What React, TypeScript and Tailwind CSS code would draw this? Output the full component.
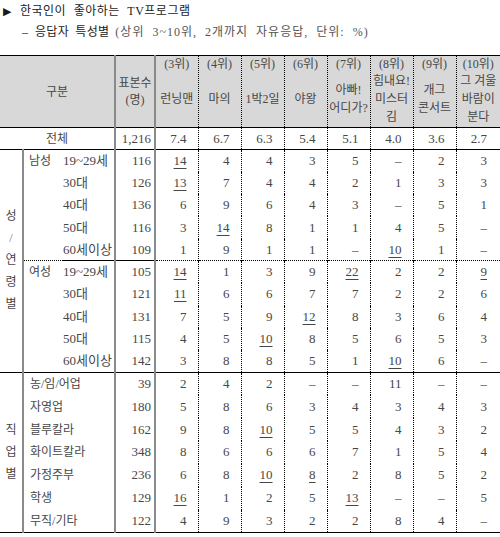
import React from "react";

const ranks: { r: string; n: string[] }[] = [
  { r: "(3위)", n: ["런닝맨"] },
  { r: "(4위)", n: ["마의"] },
  { r: "(5위)", n: ["1박2일"] },
  { r: "(6위)", n: ["야왕"] },
  { r: "(7위)", n: ["아빠!", "어디가?"] },
  { r: "(8위)", n: ["힘내요!", "미스터", "김"] },
  { r: "(9위)", n: ["개그", "콘서트"] },
  { r: "(10위)", n: ["그 겨울", "바람이", "분다"] },
];

const total = ["7.4", "6.7", "6.3", "5.4", "5.1", "4.0", "3.6", "2.7"];

type Row = { sex?: string; label: string; n: string; v: string[] };

const male: Row[] = [
  { sex: "남성", label: "19~29세", n: "116", v: ["_14", "4", "4", "3", "5", "–", "2", "3"] },
  { label: "30대", n: "126", v: ["_13", "7", "4", "4", "2", "1", "3", "3"] },
  { label: "40대", n: "136", v: ["6", "9", "6", "4", "3", "–", "5", "1"] },
  { label: "50대", n: "116", v: ["3", "_14", "8", "1", "1", "4", "5", "–"] },
  { label: "60세이상", n: "109", v: ["1", "9", "1", "1", "–", "_10", "1", "–"] },
];

const female: Row[] = [
  { sex: "여성", label: "19~29세", n: "105", v: ["_14", "1", "3", "9", "_22", "2", "2", "_9"] },
  { label: "30대", n: "121", v: ["_11", "6", "6", "7", "7", "2", "2", "6"] },
  { label: "40대", n: "131", v: ["7", "5", "9", "_12", "8", "3", "6", "4"] },
  { label: "50대", n: "115", v: ["4", "5", "_10", "8", "5", "6", "5", "3"] },
  { label: "60세이상", n: "142", v: ["3", "8", "8", "5", "1", "_10", "6", "–"] },
];

const jobs: Row[] = [
  { label: "농/임/어업", n: "39", v: ["2", "4", "2", "–", "–", "11", "–", "–"] },
  { label: "자영업", n: "180", v: ["5", "8", "6", "3", "4", "3", "4", "3"] },
  { label: "블루칼라", n: "162", v: ["9", "8", "_10", "5", "5", "4", "3", "2"] },
  { label: "화이트칼라", n: "348", v: ["8", "6", "6", "6", "7", "1", "5", "4"] },
  { label: "가정주부", n: "236", v: ["6", "8", "_10", "_8", "2", "8", "5", "2"] },
  { label: "학생", n: "129", v: ["_16", "1", "2", "5", "_13", "–", "–", "5"] },
  { label: "무직/기타", n: "122", v: ["4", "9", "3", "2", "2", "8", "4", "–"] },
];

function Num({ v }: { v: string }) {
  const u = v.startsWith("_");
  const t = u ? v.slice(1) : v;
  return (
    <span className={u ? "underline decoration-1 underline-offset-[3px]" : ""}>{t}</span>
  );
}

function Vals({ v, topDotted }: { v: string[]; topDotted?: boolean }) {
  return (
    <>
      {v.map((x, i) => (
        <td
          key={i}
          className={
            "p-0 text-right align-middle " +
            (i === 7 ? "pr-[13px] " : "pr-[11px] border-r border-dotted border-r-black ") +
            (topDotted ? "border-t border-dotted border-t-black" : "")
          }
        >
          <Num v={x} />
        </td>
      ))}
    </>
  );
}

const grayR = "border-r-2 border-solid border-r-[#8a8a8a]";

export default function App() {
  return (
    <div className="w-[500px] h-[537px] bg-white overflow-hidden text-[#474747] font-['Liberation_Serif','Noto_Sans_CJK_KR',serif]">
      <div className="mt-[3px] h-[17px] leading-[17px] text-[12px] text-[#1a1a1a] flex items-center">
        <span className="ml-[3px] w-[17px] text-[11px] font-['DejaVu_Sans',sans-serif]">▶</span>
        <span className="tracking-[0.5px] [word-spacing:4px]">한국인이 좋아하는 TV프로그램</span>
      </div>
      <div className="mt-[4px] h-[17px] leading-[17px] text-[12px] flex items-center">
        <span className="ml-[22px] w-[13px] text-[#222]">–</span>
        <span className="text-[#222] tracking-[0.3px] [word-spacing:3px]">응답자 특성별</span>
        <span className="ml-[6px] text-[#555] tracking-[1px] [word-spacing:4px]">(상위 3~10위, 2개까지 자유응답, 단위: %)</span>
      </div>
      <table className="mt-[14px] w-[500px] table-fixed border-collapse text-[13px] leading-[16px]">
        <colgroup>
          <col className="w-[23px]" />
          <col className="w-[40px]" />
          <col className="w-[52px]" />
          <col className="w-[40px]" />
          <col className="w-[43px]" />
          <col className="w-[43px]" />
          <col className="w-[43px]" />
          <col className="w-[43px]" />
          <col className="w-[43px]" />
          <col className="w-[43px]" />
          <col className="w-[43px]" />
          <col className="w-[44px]" />
        </colgroup>
        <thead>
          <tr className="h-[72px] bg-[#d8d8d8] border-t border-b border-black">
            <th colSpan={3} className={"p-0 font-normal text-[12px] align-middle " + grayR}>
              구분
            </th>
            <th className={"p-0 font-normal text-[12px] leading-[17px] align-middle " + grayR}>
              <div>표본수</div>
              <div>(명)</div>
            </th>
            {ranks.map((r, i) => (
              <th
                key={i}
                className={
                  "p-0 font-normal align-top " +
                  (i < 7 ? "border-r border-dotted border-r-black" : "")
                }
              >
                <div className="h-[71px] flex flex-col">
                  <div className="h-[16px] leading-[16px] text-[12px]">{r.r}</div>
                  <div className="flex-1 flex flex-col items-center justify-center text-[12px] leading-[18px] pb-[1px]">
                    {r.n.map((t, j) => (
                      <div key={j} className="whitespace-nowrap">{t}</div>
                    ))}
                  </div>
                </div>
              </th>
            ))}
          </tr>
        </thead>
        <tbody>
          <tr className="h-[22px] border-b border-black">
            <td colSpan={3} className={"p-0 text-center text-[12px] " + grayR}>
              전체
            </td>
            <td className={"p-0 text-right pr-[3px] " + grayR}>1,216</td>
            <Vals v={total} />
          </tr>
          {[...male, ...female].map((row, idx) => (
            <tr key={"s" + idx} className="h-[22.3px]">
              {idx === 0 && (
                <td rowSpan={10} className={"p-0 align-middle text-center text-[12px] " + grayR}>
                  <div className="flex flex-col items-center pb-[2px]">
                    <div className="h-[22px] leading-[22px]">성</div>
                    <div className="h-[22px] leading-[22px] text-[#777]">/</div>
                    <div className="h-[22px] leading-[22px]">연</div>
                    <div className="h-[22px] leading-[22px]">령</div>
                    <div className="h-[22px] leading-[22px]">별</div>
                  </div>
                </td>
              )}
              <td
                className={
                  "p-0 pl-[5px] text-[12px] whitespace-nowrap " +
                  (idx === 5 ? "border-t border-dotted border-t-black" : "")
                }
              >
                {row.sex ?? ""}
              </td>
              <td
                className={
                  "p-0 whitespace-nowrap " +
                  grayR +
                  (idx === 5 ? " border-t border-dotted border-t-black" : "")
                }
              >
                {row.label}
              </td>
              <td
                className={
                  "p-0 text-right pr-[3px] " +
                  grayR +
                  (idx === 5 ? " border-t border-dotted border-t-black" : "")
                }
              >
                {row.n}
              </td>
              <Vals v={row.v} topDotted={idx === 5} />
            </tr>
          ))}
          {jobs.map((row, idx) => (
            <tr
              key={"j" + idx}
              className={
                "h-[22.85px] " +
                (idx === 0 ? "border-t border-black " : "") +
                (idx === jobs.length - 1 ? "border-b border-black" : "")
              }
            >
              {idx === 0 && (
                <td rowSpan={7} className={"p-0 align-middle text-center text-[12px] " + grayR}>
                  <div className="flex flex-col items-center">
                    <div className="h-[22px] leading-[22px]">직</div>
                    <div className="h-[22px] leading-[22px]">업</div>
                    <div className="h-[22px] leading-[22px]">별</div>
                  </div>
                </td>
              )}
              <td colSpan={2} className={"p-0 pl-[6px] text-[12px] whitespace-nowrap " + grayR}>
                {row.label}
              </td>
              <td className={"p-0 text-right pr-[3px] " + grayR}>{row.n}</td>
              <Vals v={row.v} />
            </tr>
          ))}
        </tbody>
      </table>
    </div>
  );
}
